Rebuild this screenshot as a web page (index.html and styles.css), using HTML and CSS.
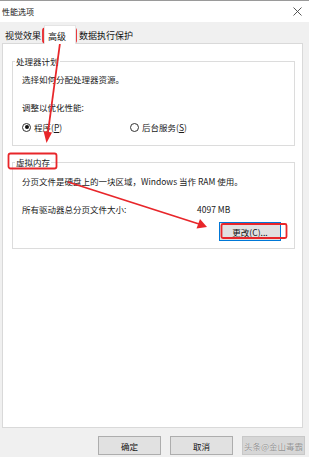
FILE: index.html
```html
<!DOCTYPE html>
<html lang="zh-CN">
<head>
<meta charset="utf-8">
<title>性能选项</title>
<link rel="stylesheet" href="styles.css">
</head>
<body>
<div class="window">
  <div class="titlebar">
    <span class="title">性能选项</span>
    <svg class="close" width="9" height="9" viewBox="0 0 9 9"><path d="M0.5 0.5L8.5 8.5M8.5 0.5L0.5 8.5" stroke="#444" stroke-width="0.9" fill="none"/></svg>
  </div>
  <div class="tabs">
    <span class="tab">视觉效果</span>
    <span class="tab tab-active">高级</span>
    <span class="tab">数据执行保护</span>
  </div>
  <div class="panel">
    <fieldset class="group group-cpu">
      <legend>处理器计划</legend>
      <p class="row first">选择如何分配处理器资源。</p>
      <p class="row gap">调整以优化性能:</p>
      <div class="radios">
        <label class="radio"><span class="dot checked"></span>程序(<u>P</u>)</label>
        <label class="radio"><span class="dot"></span>后台服务(<u>S</u>)</label>
      </div>
    </fieldset>
    <fieldset class="group group-mem">
      <legend>虚拟内存</legend>
      <p class="row first2">分页文件是硬盘上的一块区域，Windows 当作 RAM 使用。</p>
      <div class="row gap size-row"><span class="size-label">所有驱动器总分页文件大小:</span><span>4097 MB</span></div>
      <div class="btn-row"><button class="btn btn-focus">更改(<u>C</u>)...</button></div>
    </fieldset>
  </div>
  <div class="footer">
    <button class="btn fbtn">确定</button>
    <button class="btn fbtn">取消</button>
    <button class="btn fbtn fbtn-wm"><span class="wm">头条@金山毒霸</span></button>
  </div>
  <svg class="annot" width="309" height="457" viewBox="0 0 309 457">
    <g fill="none" stroke="#e8262a" stroke-width="1.8">
      <rect x="43" y="27.5" width="33" height="14" rx="2"/>
      <rect x="8.5" y="152.5" width="48" height="15" rx="2"/>
      <rect x="221.5" y="223" width="65" height="14" rx="1.5"/>
      <line x1="60" y1="42" x2="48" y2="131"/>
      <line x1="68" y1="181" x2="199" y2="223"/>
    </g>
    <g fill="#e8262a">
      <polygon points="46.5,142 43.5,130 52,131.5"/>
      <polygon points="207,226 196.5,227.5 200,218"/>
    </g>
  </svg>
</div>
</body>
</html>
```

FILE: styles.css
```css
* { box-sizing: border-box; }
html, body { margin: 0; padding: 0; }
body {
  background: #f0f0f0;
  font-family: "Noto Sans CJK SC", "Noto Sans", sans-serif;
  color: #1a1a1a;
}
.window {
  position: relative;
  width: 309px;
  height: 457px;
  display: flex;
  flex-direction: column;
  background: #f0f0f0;
  border-top: 1px solid #9a9a9a;
  overflow: hidden;
}
.titlebar {
  height: 21px;
  background: #fff;
  display: flex;
  align-items: center;
  justify-content: space-between;
  padding: 0 7px 0 2px;
}
.title { font-size: 8px; line-height: 12px; color: #111; }
.close { display: block; }
.tabs {
  height: 21px;
  display: flex;
  align-items: flex-end;
  padding-left: 2px;
}
.tab {
  font-size: 9px;
  line-height: 20px;
  height: 17px;
  padding: 0 3px;
  color: #111;
}
.tab-active {
  background: #fff;
  padding: 0 9px 0 3px;
  height: 19px;
  line-height: 21px;
  margin-bottom: -1px;
  position: relative;
  z-index: 1;
  border: 1px solid #e4e4e4;
  border-bottom: none;
}
.panel {
  flex: 1;
  margin: 0 6px 0 2px;
  background: #fff;
  border: 1px solid #d9d9d9;
  padding: 10px 7px 0 9px;
}
.group {
  margin: 0;
  border: 1px solid #dcdcdc;
  padding: 0 9px 11px 9px;
  min-width: 0;
}
.group legend {
  font-size: 8.5px;
  line-height: 14px;
  padding: 0 1px;
  margin-left: -7px;
}
.group-mem { margin-top: 9px; padding-bottom: 7px; }
.row {
  margin: 0;
  font-size: 8.5px;
  line-height: 14px;
  white-space: nowrap;
}
.first { margin-top: 4px; }
.first2 { margin-top: 5px; }
.gap { margin-top: 14px; }
.radios {
  margin-top: 6px;
  display: grid;
  grid-template-columns: 108px auto;
  font-size: 8.5px;
  line-height: 14px;
}
.radio { display: flex; align-items: center; white-space: nowrap; }
.dot {
  width: 9px;
  height: 9px;
  border: 1px solid #333;
  border-radius: 50%;
  margin-right: 3px;
  display: flex;
  align-items: center;
  justify-content: center;
  flex: none;
}
.dot.checked::after {
  content: "";
  width: 4px;
  height: 4px;
  border-radius: 50%;
  background: #111;
}
.size-row { display: grid; grid-template-columns: 175px auto; }
.btn-row { display: flex; justify-content: flex-end; margin-top: 6px; padding-right: 4px; }
.btn {
  font-family: "Noto Sans CJK SC", "Noto Sans", sans-serif;
  font-size: 8.5px;
  color: #111;
  background: #e1e1e1;
  border: 1px solid #adadad;
  height: 19px;
  width: 62px;
  padding: 0;
  line-height: 16px;
}
.btn-focus { border-color: #0078d7; }
.footer {
  height: 29px;
  display: flex;
  justify-content: flex-end;
  gap: 9px;
  padding: 8px 4px 0 0;
}
.fbtn { width: 63px; }
.fbtn-wm { background: #d6d6d6; border-color: #c8c8c8; }
.wm {
  color: #8f8f8f;
  font-size: 8.5px;
  text-shadow: 0 0 1px #fff;
  white-space: nowrap;
}
.annot { position: absolute; left: 0; top: 0; pointer-events: none; }
```
